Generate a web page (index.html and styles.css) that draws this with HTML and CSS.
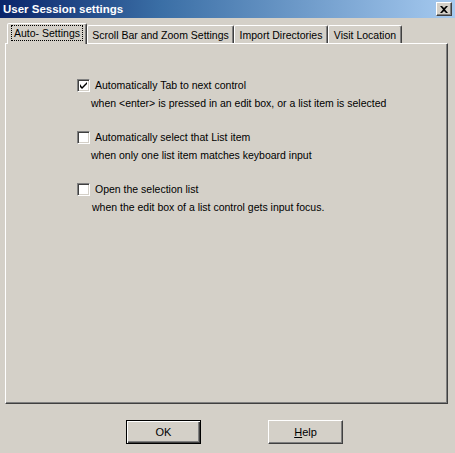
FILE: index.html
```html
<!DOCTYPE html>
<html>
<head>
<meta charset="utf-8">
<link rel="stylesheet" href="styles.css">
</head>
<body>
<div class="window">
  <div class="titlebar">
    <span class="title">User Session settings</span>
    <span class="close">
      <svg width="8" height="7" viewBox="0 0 8 7"><path d="M0 0h2l2 2 2-2h2L5 3.5 8 7H6L4 5 2 7H0l3-3.5z" fill="#000"/></svg>
    </span>
  </div>
  <div class="tabs">
    <div class="tab active t1"><span class="focus">Auto- Settings</span></div>
    <div class="tab t2">Scroll Bar and Zoom Settings</div>
    <div class="tab t3">Import Directories</div>
    <div class="tab t4">Visit Location</div>
  </div>
  <div class="panel">
    <div class="option">
      <div class="row">
        <span class="cb">
          <svg width="7" height="7" viewBox="0 0 7 7"><path d="M0 2v3l2 2 5-5V0L2 5z" fill="#000"/></svg>
        </span>
        <span class="label">Automatically Tab to next control</span>
      </div>
      <div class="sub">when &lt;enter&gt; is pressed in an edit box, or a list item is selected</div>
    </div>
    <div class="option">
      <div class="row">
        <span class="cb"></span>
        <span class="label">Automatically select that List item</span>
      </div>
      <div class="sub">when only one list item matches keyboard input</div>
    </div>
    <div class="option">
      <div class="row">
        <span class="cb"></span>
        <span class="label">Open the selection list</span>
      </div>
      <div class="sub sub3">when the edit box of a list control gets input focus.</div>
    </div>
  </div>
  <div class="buttons">
    <button class="btn default">OK</button>
    <button class="btn"><u>H</u>elp</button>
  </div>
</div>
</body>
</html>
```
FILE: styles.css
```css
html, body {
  margin: 0;
  padding: 0;
  background: #d4d0c8;
}
.window {
  width: 455px;
  height: 453px;
  background: #d4d0c8;
  font-family: "Liberation Sans", Arial, sans-serif;
  font-size: 10.5px;
  color: #000;
  overflow: hidden;
}
.titlebar {
  height: 18px;
  background: linear-gradient(to right, #0a246a 0%, #3a6ea5 35%, #a6caf0 100%);
  display: flex;
  align-items: center;
  justify-content: space-between;
  padding: 0 3px 0 3px;
}
.title {
  color: #fff;
  font-weight: bold;
  font-size: 11.5px;
  font-family: "Liberation Sans", Arial, sans-serif;
}
.close {
  width: 12px;
  height: 10px;
  background: #d4d0c8;
  border-style: solid;
  border-width: 1px;
  border-color: #fff #404040 #404040 #fff;
  box-shadow: inset -1px -1px 0 #808080;
  display: flex;
  align-items: center;
  justify-content: center;
  padding: 1px;
}
.tabs {
  display: flex;
  align-items: flex-end;
  height: 25px;
  padding-left: 7px;
}
.tab {
  box-sizing: border-box;
  height: 18px;
  border-style: solid;
  border-width: 1px 1px 0 1px;
  border-color: #fff #404040 transparent #fff;
  box-shadow: inset -1px 0 0 #808080;
  border-radius: 2px 2px 0 0;
  display: flex;
  align-items: center;
  justify-content: center;
  white-space: nowrap;
}
.tab.active {
  height: 21px;
  margin-bottom: -1px;
  position: relative;
  z-index: 2;
  background: #d4d0c8;
  align-items: flex-start;
  padding-top: 2px;
}
.focus {
  outline: 1px dotted #000;
  outline-offset: 0;
  padding: 0 2px;
  line-height: 14px;
}
.t1 { width: 80px; }
.t2 { width: 147px; }
.t3 { width: 94px; }
.t4 { width: 74px; }
.panel {
  box-sizing: border-box;
  margin-left: 5px;
  width: 443px;
  height: 361px;
  border-style: solid;
  border-width: 1px;
  border-color: #fff #404040 #404040 #fff;
  box-shadow: inset -1px -1px 0 #808080;
  padding: 35px 0 0 71px;
  display: flex;
  flex-direction: column;
  gap: 21px;
}
.option {
  display: flex;
  flex-direction: column;
}
.row {
  display: flex;
  align-items: center;
  height: 13px;
}
.cb {
  box-sizing: border-box;
  width: 13px;
  height: 13px;
  background: #fff;
  border-style: solid;
  border-width: 1px;
  border-color: #808080 #fff #fff #808080;
  box-shadow: inset 1px 1px 0 #404040, inset -1px -1px 0 #d4d0c8;
  display: flex;
  align-items: center;
  justify-content: center;
  flex-shrink: 0;
}
.label {
  margin-left: 5px;
  line-height: 13px;
  white-space: nowrap;
}
.sub {
  margin-left: 14px;
  margin-top: 4px;
  line-height: 14px;
  white-space: nowrap;
}
.sub3 { margin-left: 15px; }
.buttons {
  display: flex;
  gap: 67px;
  padding-left: 126px;
  margin-top: 16px;
}
.btn {
  box-sizing: border-box;
  width: 75px;
  height: 24px;
  background: #d4d0c8;
  font-family: "Liberation Sans", Arial, sans-serif;
  font-size: 11px;
  color: #000;
  border-style: solid;
  border-width: 1px;
  border-color: #fff #404040 #404040 #fff;
  box-shadow: inset -1px -1px 0 #808080;
  padding: 0;
  margin: 0;
}
.btn.default {
  border-color: #000;
  box-shadow: inset 1px 1px 0 #fff, inset -1px -1px 0 #404040, inset -2px -2px 0 #808080;
}
```
